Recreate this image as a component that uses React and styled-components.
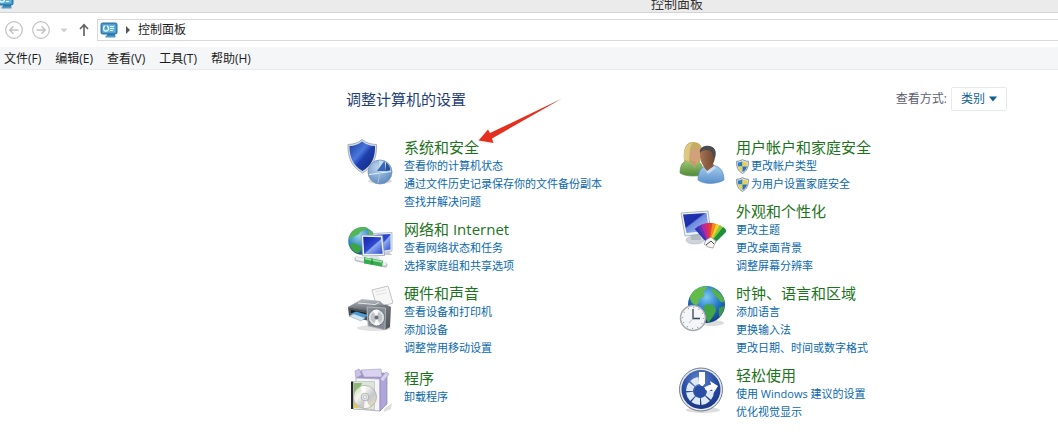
import React, { useState } from 'react';
import styled, { createGlobalStyle } from 'styled-components';

const GlobalStyle = createGlobalStyle`
body{
  margin:0;
  background:#fff;
  color:#1c1c1c;
  font-family:"Open Sans","Noto Sans CJK SC",sans-serif;
  font-size:12px;
  line-height:18px;
}
*{
  box-sizing:border-box;
}
button,select{
  font:inherit;
  color:inherit;
}`;

const Window = styled.div`
width:100%;
overflow-x:hidden;`;

const TitleBar = styled.header`
display:flex;
align-items:flex-end;
height:13px;
overflow:hidden;
background:#ebebeb;
border-bottom:1px solid #d4d4d4;`;

const TitleIcon = styled.div`
display:flex;
width:651px;
height:20px;
margin-left:-4px;
padding-right:4px;
box-sizing:content-box;`;

const WindowTitle = styled.span`
font-size:13px;
color:#333;
white-space:nowrap;`;

const NavBar = styled.nav`
display:flex;
align-items:center;
height:34px;
padding-left:4px;`;

const NavButton = styled.button`
display:flex;
align-items:center;
justify-content:center;
width:${(props)=>props.$width}px;
height:22px;
padding:0;
border:0;
background:none;
cursor:pointer;`;

const Address = styled.div`
flex:1;
display:flex;
align-items:center;
gap:8px;
height:22px;
padding-left:2px;
border:1px solid #d9d9d9;
border-right:0;`;

const MenuBar = styled.div`
display:flex;
align-items:center;
gap:14px;
height:23px;
padding:2px 4px 0;
background:#f4f6f8;
border-bottom:1px solid #e8eaec;`;

const MenuButton = styled.button`
padding:0;
border:0;
background:none;
white-space:nowrap;
cursor:pointer;`;

const Main = styled.main`
padding:16px 51px 24px 346px;`;

const PageHead = styled.div`
display:flex;
align-items:center;
justify-content:space-between;
height:25px;
margin-bottom:27px;`;

const PageTitle = styled.h1`
margin:0;
font-size:15px;
font-weight:400;
color:#1f3f77;`;

const ViewBy = styled.div`
display:flex;
align-items:center;
gap:4px;
color:#5b6070;`;

const SelectBox = styled.div`
position:relative;
svg{
  position:absolute;
  top:9px;
  right:10px;
  pointer-events:none;
}`;

const Select = styled.select`
appearance:none;
width:56px;
height:24px;
padding:0 0 0 9px;
border:1px solid #e6eaee;
border-radius:2px;
background:#fff;
color:#0f6296;`;

const Columns = styled.div`
display:grid;
grid-template-columns:332px 1fr;`;

const Column = styled.div`
display:flex;
flex-direction:column;
gap:9px;`;

const Category = styled.section`
position:relative;
display:flex;
align-items:flex-start;
gap:10px;
min-height:55px;
> svg{
  flex:none;
  margin-bottom:-12px;
}`;

const CategoryBody = styled.div`
display:flex;
flex-direction:column;
justify-content:center;
min-height:42px;
white-space:nowrap;`;

const CategoryTitle = styled.h2`
margin:0;
font-size:15px;
line-height:19px;
font-weight:400;
a{
  color:#1c731c;
  text-decoration:none;
}`;

const TaskLink = styled.a`
display:flex;
align-items:center;
gap:2px;
height:18px;
font-size:11px;
color:#0a68ae;
text-decoration:none;
&:hover{
  text-decoration:underline;
}`;

const Pointer = styled.svg`
position:absolute;
top:-41px;
left:131px;
pointer-events:none;`;

const PanelIcon = () => (
  <svg width="18" height="18" viewBox="0 0 18 18">
    <rect x="1" y="2" width="16" height="11" rx="1.5" fill="#3f8fc0" stroke="#2c6f9e" />
    <rect x="2.5" y="3.5" width="13" height="8" fill="#5fb2dc" />
    <circle cx="6" cy="7.5" r="2.5" fill="none" stroke="#e8f6fd" strokeWidth="1.3" />
    <path d="M6 7.500V4.500" stroke="#1f6fa5" />
    <path d="M10 5.500h4M10 7.500h4M10 9.500h3" stroke="#e8f6fd" strokeWidth="1.1" />
    <path d="M7 13h8v2h-8z" fill="#2f77a8" />
    <path d="M5.500 15.500h10" stroke="#4f9ac6" strokeWidth="2" />
  </svg>
)

const CircleArrow = ({ flip }) => (
  <svg width="20" height="20" viewBox="0 0 20 20" fill="none" stroke="#c2c2c2">
    <circle cx="10" cy="10" r="8.3" strokeWidth="1.2" />
    <path d={flip ? "M5.500 10h8.500M10.500 6.300l3.700 3.700l-3.700 3.700" : "M14.500 10H6M9.500 6.300L5.800 10l3.700 3.700"} strokeWidth="1.5" />
  </svg>
)

const UacShield = () => (
  <svg width="13" height="15" viewBox="0 0 13 15">
    <path d="M6.500 .6C8.500 1.800 10.500 2.200 12.400 2.200C12.700 8 11 12 6.500 14.400C2 12 .3 8 .6 2.200C2.500 2.200 4.500 1.800 6.500 .6z" fill="#dfe6ec" stroke="#7d8b99" strokeWidth=".9" />
    <path d="M6.500 2.200V7.500H2C1.800 6 1.700 5 1.800 3.500C3.500 3.400 5 3 6.500 2.200z" fill="#2f7bc4" />
    <path d="M6.500 2.200V7.500H11C11.200 6 11.300 5 11.200 3.500C9.500 3.400 8 3 6.500 2.200z" fill="#e6d34a" />
    <path d="M6.500 13V7.500H2C2.600 10 4 11.800 6.500 13z" fill="#e6d34a" />
    <path d="M6.500 13V7.500H11C10.400 10 9 11.800 6.500 13z" fill="#2a70b8" />
  </svg>
)

const SecurityIcon = () => (
  <svg width="48" height="48" viewBox="0 0 48 48">
    <defs>
      <linearGradient id="shieldBlue" x1="0" y1="0" x2="1" y2="1">
        <stop offset="0" stopColor="#1c3a9c" />
        <stop offset=".4" stopColor="#4a78dd" />
        <stop offset=".55" stopColor="#1d3fae" />
        <stop offset="1" stopColor="#14266e" />
      </linearGradient>
      <radialGradient id="pieBlue" cx=".4" cy=".3" r=".8">
        <stop offset="0" stopColor="#b9d3ec" />
        <stop offset="1" stopColor="#5583ba" />
      </radialGradient>
    </defs>
    <ellipse cx="34" cy="43" rx="12" ry="3" fill="#ddd" />
    <path d="M16 1.500C20.500 5 25 6.300 30.500 6.500C31 19 27.500 29 16.500 35C5.500 29 1.500 19 2 6.500C7.500 6.300 12 5 16 1.500z" fill="#d5dbe3" stroke="#929daf" strokeWidth=".8" />
    <path d="M16 3.500C20 6.500 24 7.800 29 8C29.300 19 26 27.500 16.500 33C7 27.500 3.300 19 3.500 8C8.500 7.800 12.500 6.500 16 3.500z" fill="url(#shieldBlue)" />
    <circle cx="34" cy="34" r="12" fill="url(#pieBlue)" stroke="#7895b5" strokeWidth=".8" />
    <path d="M33 34V22.500A11.500 11.500 0 0 1 45 33z" fill="#c3daf0" />
    <path d="M31 33L38.500 22.800L40 33z" fill="#3b66b5" />
    <path d="M40 33V24.500A11 11 0 0 1 44.500 32.500z" fill="#27509b" />
    <path d="M23 36.500L45 33.500" stroke="#e6f0f9" strokeWidth="1" />
    <path d="M34 34L32 45" stroke="#a6c4e2" />
  </svg>
)

const NetworkIcon = () => (
  <svg width="48" height="48" viewBox="0 0 48 48">
    <defs>
      <radialGradient id="netGlobe" cx=".4" cy=".3" r=".75">
        <stop offset="0" stopColor="#9bd7ee" />
        <stop offset=".6" stopColor="#2f83bd" />
        <stop offset="1" stopColor="#17456f" />
      </radialGradient>
      <linearGradient id="netScreen" x1="0" y1="0" x2="1" y2="1">
        <stop offset="0" stopColor="#1421a8" />
        <stop offset=".5" stopColor="#2f4bd0" />
        <stop offset=".55" stopColor="#8faaf0" />
        <stop offset="1" stopColor="#2a48cc" />
      </linearGradient>
    </defs>
    <circle cx="16" cy="21" r="13.800" fill="url(#netGlobe)" />
    <path d="M5 13C9 7 18 6 22 8C19 11 14 10 13 14C10 16 8 15 5 19C3 18 3.500 15 5 13z" fill="#55b552" />
    <path d="M4 24C8 22 13 25 15 28C15 31 13 33 11 33C7 31 4 28 4 24z" fill="#3da444" />
    <path d="M22 9C26 11 28 14 29 17L23 15z" fill="#62b958" />
    <path d="M27 13.500L46 12.500L46 31L29 34z" fill="#eef3f9" stroke="#98a7bb" strokeWidth=".7" />
    <path d="M28 15L44.500 14L44.500 29.500L30 32z" fill="url(#netScreen)" />
    <path d="M36 33l7-1l3 3h-9z" fill="#c3ccd6" />
    <path d="M15.500 15L36.500 15.500L38.500 35.500L16.500 36z" fill="#eef3f9" stroke="#8796ac" strokeWidth=".7" />
    <path d="M17.200 16.700L35 17.200L36.700 33.700L18.200 34z" fill="url(#netScreen)" />
    <path d="M24 36h8l3 4l-12-1z" fill="#dbe1e7" />
    <path d="M11 39L39 45" stroke="#b9c0c7" strokeWidth="5" strokeLinecap="round" />
    <path d="M11 38.500L39 44" stroke="#edf1f4" strokeWidth="3" strokeLinecap="round" />
    <path d="M18 37L37 40.800L36 46.500L18 43.500z" fill="#35ac4d" />
    <path d="M19 38.500L36 42" stroke="#a2e2a7" strokeWidth="1.700" />
    <path d="M26 38.500v6" stroke="#1d7c36" />
  </svg>
)

const HardwareIcon = () => (
  <svg width="48" height="48" viewBox="0 0 48 48">
    <defs>
      <linearGradient id="printerTop" x1="0" y1="0" x2="0" y2="1">
        <stop offset="0" stopColor="#b9bdc3" />
        <stop offset="1" stopColor="#575c63" />
      </linearGradient>
      <linearGradient id="speakerBox" x1="0" y1="0" x2="1" y2="1">
        <stop offset="0" stopColor="#8b9096" />
        <stop offset="1" stopColor="#4b5056" />
      </linearGradient>
    </defs>
    <ellipse cx="28" cy="44" rx="17" ry="3" fill="#e1e1e1" />
    <path d="M26 6L42 2L47 19L31 24z" fill="#f7f7f7" stroke="#b5b5b5" strokeWidth=".8" />
    <path d="M29 8l11-2.500M30 11l11-2.500" stroke="#ddd" strokeWidth=".8" />
    <path d="M2 23L16 15L34 17L40 23L23 28z" fill="url(#printerTop)" />
    <path d="M12 19l17 1.500l4-2" fill="none" stroke="#e6e8ea" />
    <path d="M2 23L22 27L23 37L3 32z" fill="#4d5258" />
    <path d="M5 26L20 29V33L5 30z" fill="#161a1f" />
    <path d="M4 30L10 27.500L22 31L17 35.500z" fill="#4b9bd1" />
    <path d="M3 32L8 30L19 34L15 37z" fill="#cfe6f5" stroke="#8c9aa6" strokeWidth=".5" />
    <path d="M21 23L40 20.500L45 23L44 43L39 46L22 42z" fill="url(#speakerBox)" />
    <path d="M21 23L39.500 24L39 46L22 42z" fill="#858b94" stroke="#c6cacd" strokeWidth=".7" />
    <circle cx="30.500" cy="33.500" r="8.200" fill="#dcdfe1" stroke="#63686e" strokeWidth=".8" />
    <circle cx="30.500" cy="33.500" r="5.800" fill="#bfc4c8" />
    <path d="M30.500 33.500L27 26.500A8 8 0 0 1 33 26zM30.500 33.500L34 40.500A8 8 0 0 1 28 41z" fill="#fafafa" />
    <circle cx="30.500" cy="33.500" r="2" fill="#6b7077" />
  </svg>
)

const ProgramsIcon = () => (
  <svg width="48" height="48" viewBox="0 0 48 48">
    <defs>
      <linearGradient id="discShine" x1="0" y1="0" x2="1" y2="1">
        <stop offset="0" stopColor="#bfd99f" />
        <stop offset=".35" stopColor="#f4f4ee" />
        <stop offset=".6" stopColor="#c6c9cc" />
        <stop offset="1" stopColor="#f3e3b8" />
      </linearGradient>
    </defs>
    <path d="M38 43L46 37L45 43L38 46z" fill="#dedede" />
    <path d="M10 12L15 4L40 7L34 13z" fill="#9e94c4" />
    <path d="M10 12L9 5L13 3L16 9z" fill="#cac3e6" stroke="#9c93bf" strokeWidth=".6" />
    <path d="M15 4L35 3L36 11L18 11z" fill="#d9d3f0" stroke="#a59cc8" strokeWidth=".6" />
    <path d="M10 12L34 13V45L10 43z" fill="#f5f3fb" stroke="#a79fc5" strokeWidth=".8" />
    <path d="M34 13L41 7V38L34 45z" fill="#b0a5da" stroke="#8f85b8" strokeWidth=".7" />
    <path d="M34 13L40 6L43 8L37 16z" fill="#d7d0ee" stroke="#9c93bf" strokeWidth=".6" />
    <path d="M5 15.500H7.500V43H5z" fill="#272727" />
    <path d="M7.500 15.500H28.500V43.500H7.500z" fill="#dce6d8" stroke="#b2b7ac" strokeWidth=".6" />
    <path d="M8 17h8l-3 9l-5 2z" fill="#8eb775" />
    <path d="M8 35l5 7h-5z" fill="#e6c862" />
    <circle cx="19" cy="31" r="11.500" fill="url(#discShine)" stroke="#a3a6a9" strokeWidth=".7" />
    <path d="M19 31L14 21A11 11 0 0 1 20 20zM19 31L24 41A11 11 0 0 1 18 42z" fill="#fff" opacity=".8" />
    <circle cx="19" cy="31" r="3.800" fill="#e2e4e6" stroke="#9ea1a5" strokeWidth=".7" />
    <circle cx="19" cy="31" r="1.500" fill="#fff" stroke="#909397" strokeWidth=".5" />
  </svg>
)

const UsersIcon = () => (
  <svg width="48" height="48" viewBox="0 0 48 48">
    <defs>
      <linearGradient id="womanTop" x1="0" y1="0" x2="0" y2="1">
        <stop offset="0" stopColor="#a3c878" />
        <stop offset="1" stopColor="#4f8a37" />
      </linearGradient>
      <linearGradient id="manTop" x1="0" y1="0" x2="0" y2="1">
        <stop offset="0" stopColor="#a9cdf0" />
        <stop offset="1" stopColor="#5990cb" />
      </linearGradient>
      <linearGradient id="manSkin" x1="0" y1="0" x2="1" y2="0">
        <stop offset="0" stopColor="#a87350" />
        <stop offset="1" stopColor="#6b4733" />
      </linearGradient>
    </defs>
    <path d="M2 35C2 27 5 22 13 22C20 22 24 25 25 31L24 37C16 39 6 38 2 35z" fill="url(#womanTop)" stroke="#5c8c44" strokeWidth=".6" />
    <path d="M6 23C5 12 7 4 15 4C22 4 25 9 24 14L22 24L17 27L11 24z" fill="#c6ab62" />
    <path d="M12 12C15 13 19 11 22 9C24 14 23 22 18 24C14 24 11 19 12 12z" fill="#d3a07c" />
    <path d="M6 22C5 12 8 5 15 5C11 9 12 15 11 23z" fill="#ddc883" />
    <path d="M12 22L18 24L17 31z" fill="#c99873" />
    <path d="M20 42C20 33 23 28 32 27C41 27 46 32 46 42C40 46 26 47 20 42z" fill="url(#manTop)" stroke="#5485b8" strokeWidth=".6" />
    <path d="M25 27L29 34L36 28L34 22L26 24z" fill="#8d5d42" />
    <path d="M22 15C22 10 26 8 30 8C35 8 38 12 37 18C37 24 34 29 29 29C25 29 22 24 22 15z" fill="url(#manSkin)" />
    <path d="M22 15C21 10 26 7 31 8C37 9 39 13 37 20L35 19C35 15 33 12 29 12C25 12 23 13 22 15z" fill="#4a4c50" />
    <path d="M25 29L29 33L36 28L38 30L30 36z" fill="#c5dcf4" />
  </svg>
)

const swatches = ["#2a35b8", "#6a2fb5", "#b02aa5", "#d92a6a", "#e5402b", "#f08a1f", "#f2cf2b", "#8cc83a", "#1f8f3a"]

const AppearanceIcon = () => (
  <svg width="48" height="48" viewBox="0 0 48 48">
    <defs>
      <linearGradient id="deskScreen" x1="0" y1="0" x2="1" y2="1">
        <stop offset="0" stopColor="#2338b4" />
        <stop offset=".4" stopColor="#1c2da8" />
        <stop offset=".45" stopColor="#6d8ae0" />
        <stop offset="1" stopColor="#b4c8f4" />
      </linearGradient>
    </defs>
    <ellipse cx="17" cy="38" rx="9" ry="4" fill="#cfd4da" stroke="#aeb5bd" strokeWidth=".6" />
    <path d="M13 30h9l1 8h-10z" fill="#b3bac2" />
    <path d="M3 11L30 9L33 31L7 34z" fill="#edf1f5" stroke="#9aa6b3" strokeWidth=".8" />
    <path d="M5 12.500L28.500 11L31 28.500L8.500 31z" fill="url(#deskScreen)" />
    {swatches.map((color, i) => (
      <path
        key={color}
        d="M31 43L29 21L34.500 21L34 43z"
        fill={color}
        transform={`rotate(${-36 + i * 10} 32 43)`}
      />
    ))}
    <path d="M28 38L33 35L38 39L35 46L30 45L26 42z" fill="#f6f6f6" stroke="#8b8b8b" strokeWidth=".7" />
    <path d="M28 43L33 39L36 42" fill="none" stroke="#444" strokeWidth="1" />
  </svg>
)

const ClockIcon = () => (
  <svg width="48" height="48" viewBox="0 0 48 48">
    <defs>
      <radialGradient id="bigGlobe" cx=".5" cy=".3" r=".7">
        <stop offset="0" stopColor="#7cc9f2" />
        <stop offset=".55" stopColor="#2273c4" />
        <stop offset="1" stopColor="#123c80" />
      </radialGradient>
    </defs>
    <ellipse cx="34" cy="39" rx="12" ry="3" fill="#dcdcdc" />
    <circle cx="28.500" cy="20.500" r="18.500" fill="url(#bigGlobe)" />
    <path d="M12 13C15 5 22 2 29 2.500C30 5 26 6 25 9C28 11 26 14 22 14C20 17 22 20 18 21C14 20 12 17 12 13z" fill="#63bb4c" />
    <path d="M33 4C40 6 45 11 46.500 17C44 20 41 17 40 14C36 13 37 9 34 8z" fill="#56b048" />
    <path d="M27 21C31 19 37 21 38 25C38 29 34 34 31 38C28 38 28 33 28 30C26 27 25 24 27 21z" fill="#43a545" />
    <path d="M41 24L46 22C46 27 44 31 41 33z" fill="#3c9a44" />
    <circle cx="15" cy="34" r="12.500" fill="#f4f5f6" stroke="#a5aab0" strokeWidth="1.500" />
    <circle cx="15" cy="34" r="10.500" fill="none" stroke="#858b92" strokeWidth="1.200" strokeDasharray=".8 4.700" />
    <path d="M15 25V34.500H22" fill="none" stroke="#33445e" strokeWidth="1.300" />
    <path d="M15 34.500L11 39" stroke="#9aa" strokeWidth=".7" />
  </svg>
)

const EaseIcon = () => (
  <svg width="48" height="48" viewBox="0 0 48 48">
    <defs>
      <radialGradient id="easeBlue" cx=".45" cy=".25" r=".8">
        <stop offset="0" stopColor="#5f86cf" />
        <stop offset=".6" stopColor="#2548a0" />
        <stop offset="1" stopColor="#1b3480" />
      </radialGradient>
    </defs>
    <ellipse cx="25" cy="44" rx="17" ry="3" fill="#ddd" />
    <circle cx="23" cy="23.500" r="21.500" fill="#e6e9ee" stroke="#707b92" />
    <circle cx="23" cy="23.500" r="19.500" fill="url(#easeBlue)" />
    <circle
      cx="22"
      cy="25"
      r="10.500"
      fill="none"
      stroke="#dfe8f5"
      strokeWidth="7"
      pathLength="80"
      strokeDasharray="8.500 1.500 8.500 1.500 8.500 1.500 8.500 1.500 8.500 1.500 8.500 21.500"
    />
    <path d="M21 6H27V17.500L24 21L21 17.500z" fill="#fff" />
    <path d="M25 22L30 19.500L33 18.500L32 15L40 20L35.500 27L34 23.500L30 25.500z" fill="#fff" />
    <circle cx="22" cy="25" r="5.500" fill="#2a4da4" />
  </svg>
)

const columns = [
  [
    { title: "系统和安全", Icon: SecurityIcon, pointed: true, tasks: ["查看你的计算机状态", "通过文件历史记录保存你的文件备份副本", "查找并解决问题"] },
    { title: "网络和 Internet", Icon: NetworkIcon, tasks: ["查看网络状态和任务", "选择家庭组和共享选项"] },
    { title: "硬件和声音", Icon: HardwareIcon, tasks: ["查看设备和打印机", "添加设备", "调整常用移动设置"] },
    { title: "程序", Icon: ProgramsIcon, tasks: ["卸载程序"] },
  ],
  [
    { title: "用户帐户和家庭安全", Icon: UsersIcon, shield: true, tasks: ["更改帐户类型", "为用户设置家庭安全"] },
    { title: "外观和个性化", Icon: AppearanceIcon, tasks: ["更改主题", "更改桌面背景", "调整屏幕分辨率"] },
    { title: "时钟、语言和区域", Icon: ClockIcon, tasks: ["添加语言", "更换输入法", "更改日期、时间或数字格式"] },
    { title: "轻松使用", Icon: EaseIcon, tasks: ["使用 Windows 建议的设置", "优化视觉显示"] },
  ],
]

const menus = ["文件(F)", "编辑(E)", "查看(V)", "工具(T)", "帮助(H)"]

function App() {
  const [view, setView] = useState("类别")

  return (
    <Window>
      <GlobalStyle />
      <TitleBar>
        <TitleIcon><PanelIcon /></TitleIcon>
        <WindowTitle>控制面板</WindowTitle>
      </TitleBar>
      <NavBar>
        <NavButton $width={20} aria-label="后退"><CircleArrow /></NavButton>
        <NavButton $width={34} aria-label="前进"><CircleArrow flip /></NavButton>
        <NavButton $width={12} aria-label="最近">
          <svg width="8" height="5" viewBox="0 0 8 5"><path d="M.5 .5h7L4 4.500z" fill="#cfcfcf" /></svg>
        </NavButton>
        <NavButton $width={27} aria-label="向上">
          <svg width="12" height="14" viewBox="0 0 12 14" fill="none" stroke="#666" strokeWidth="1.700">
            <path d="M6 13V2M2 6l4-4.300L10 6" />
          </svg>
        </NavButton>
        <Address>
          <PanelIcon />
          <svg width="4" height="8" viewBox="0 0 4 8"><path d="M0 0L4 4L0 8z" fill="#555" /></svg>
          <span>控制面板</span>
        </Address>
      </NavBar>
      <MenuBar>
        {menus.map((item) => (
          <MenuButton key={item}>{item}</MenuButton>
        ))}
      </MenuBar>
      <Main>
        <PageHead>
          <PageTitle>调整计算机的设置</PageTitle>
          <ViewBy>
            <label htmlFor="view">查看方式:</label>
            <SelectBox>
              <Select id="view" value={view} onChange={(e)=>setView(e.target.value)}>
                <option>类别</option>
              </Select>
              <svg width="8" height="6" viewBox="0 0 8 6"><path d="M0 .5h8L4 5.500z" fill="#0f5c8e" /></svg>
            </SelectBox>
          </ViewBy>
        </PageHead>
        <Columns>
          {columns.map((items, i) => (
            <Column key={i}>
              {items.map(({ title, Icon, tasks, shield, pointed }) => (
                <Category key={title}>
                  <Icon />
                  <CategoryBody>
                    <CategoryTitle><a href="#">{title}</a></CategoryTitle>
                    {tasks.map((task) => (
                      <TaskLink href="#" key={task}>
                        {shield && <UacShield />}
                        {task}
                      </TaskLink>
                    ))}
                  </CategoryBody>
                  {pointed && (
                    <Pointer width="86" height="50" viewBox="0 0 86 50">
                      <path d="M1.500 43.500L11 32.500L13 36L85 1.500L15 41.500L16.500 46z" fill="#e5301f" />
                    </Pointer>
                  )}
                </Category>
              ))}
            </Column>
          ))}
        </Columns>
      </Main>
    </Window>
  )
}

export default App
